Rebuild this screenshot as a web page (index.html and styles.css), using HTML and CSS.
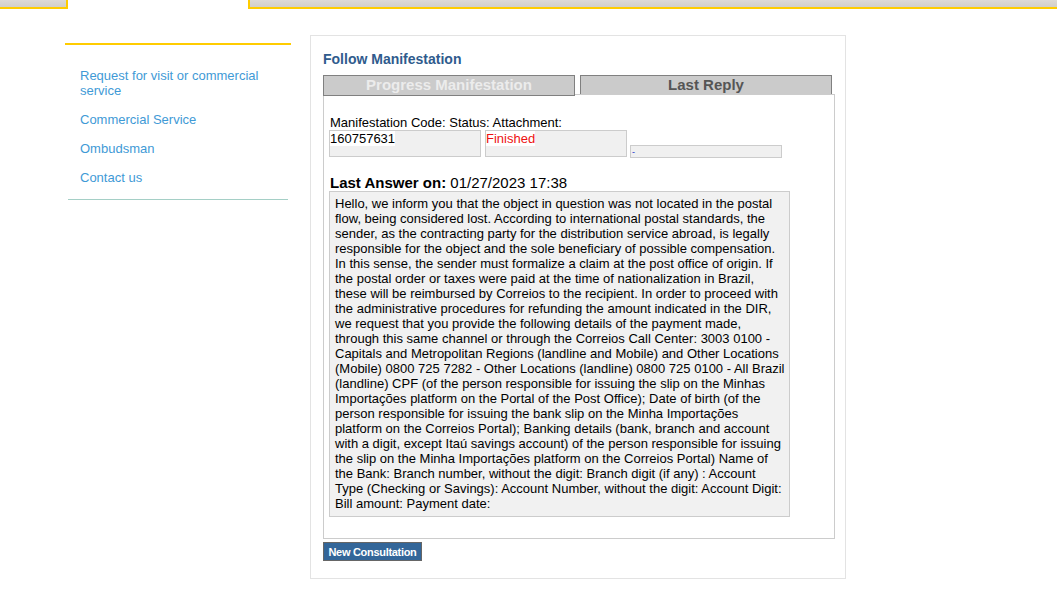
FILE: index.html
```html
<!DOCTYPE html>
<html>
<head>
<meta charset="utf-8">
<link rel="stylesheet" href="styles.css">
</head>
<body>
<div class="topbar">
  <div class="tab-left"></div>
  <div class="tab-gap"></div>
  <div class="tab-right"></div>
</div>
<div class="page">
  <aside class="sidebar">
    <div class="side-line"></div>
    <ul class="side-links">
      <li><a href="#">Request for visit or commercial service</a></li>
      <li><a href="#">Commercial Service</a></li>
      <li><a href="#">Ombudsman</a></li>
      <li><a href="#">Contact us</a></li>
    </ul>
    <div class="side-bottom"></div>
  </aside>
  <main class="panel">
    <h2 class="title">Follow Manifestation</h2>
    <div class="tabs">
      <div class="tab tab-progress">Progress Manifestation</div>
      <div class="tab tab-reply">Last Reply</div>
    </div>
    <div class="content">
      <div class="labels">Manifestation Code: Status: Attachment:</div>
      <div class="fields">
        <div class="field f-code"><span>160757631</span></div>
        <div class="field f-status"><span>Finished</span></div>
        <div class="field f-attach"><span>-</span></div>
      </div>
      <div class="answer-head"><b>Last Answer on:</b> 01/27/2023 17:38</div>
      <div class="answer">Hello, we inform you that the object in question was not located in the postal<br>flow, being considered lost. According to international postal standards, the<br>sender, as the contracting party for the distribution service abroad, is legally<br>responsible for the object and the sole beneficiary of possible compensation.<br>In this sense, the sender must formalize a claim at the post office of origin. If<br>the postal order or taxes were paid at the time of nationalization in Brazil,<br>these will be reimbursed by Correios to the recipient. In order to proceed with<br>the administrative procedures for refunding the amount indicated in the DIR,<br>we request that you provide the following details of the payment made,<br>through this same channel or through the Correios Call Center: 3003 0100 -<br>Capitals and Metropolitan Regions (landline and Mobile) and Other Locations<br>(Mobile) 0800 725 7282 - Other Locations (landline) 0800 725 0100 - All Brazil<br>(landline) CPF (of the person responsible for issuing the slip on the Minhas<br>Importações platform on the Portal of the Post Office); Date of birth (of the<br>person responsible for issuing the bank slip on the Minha Importações<br>platform on the Correios Portal); Banking details (bank, branch and account<br>with a digit, except Itaú savings account) of the person responsible for issuing<br>the slip on the Minha Importações platform on the Correios Portal) Name of<br>the Bank: Branch number, without the digit: Branch digit (if any) : Account<br>Type (Checking or Savings): Account Number, without the digit: Account Digit:<br>Bill amount: Payment date:</div>
    </div>
    <button class="btn">New Consultation</button>
  </main>
</div>
</body>
</html>
```
FILE: styles.css
```css
* { box-sizing: border-box; }
body {
  margin: 0;
  font-family: "Liberation Sans", Arial, sans-serif;
  background: #fff;
  color: #000;
}
.topbar {
  display: flex;
  height: 9px;
}
.tab-left {
  width: 68px;
  background: linear-gradient(#dedad6, #d2cec9);
  border-right: 2px solid #ffcc00;
  border-bottom: 2px solid #ffcc00;
}
.tab-gap { width: 180px; }
.tab-right {
  flex: 1;
  background: linear-gradient(#dedad6, #d2cec9);
  border-left: 2px solid #ffcc00;
  border-bottom: 2px solid #ffcc00;
}
.page {
  display: flex;
  align-items: flex-start;
  padding-left: 65px;
}
.sidebar {
  width: 226px;
  margin-top: 34px;
}
.side-line {
  height: 2px;
  background: #ffcc00;
}
.side-links {
  list-style: none;
  margin: 0;
  padding: 23px 0 0 15px;
}
.side-links li {
  font-size: 13px;
  line-height: 15px;
  margin-bottom: 14px;
}
.side-links a {
  color: #3f9ad6;
  text-decoration: none;
}
.side-bottom {
  height: 1px;
  background: #a5cfc6;
  margin: 0 3px;
}
.panel {
  width: 536px;
  margin-left: 19px;
  margin-top: 26px;
  height: 544px;
  border: 1px solid #e3e3e3;
  padding: 15px 12px 0 12px;
}
.title {
  margin: 0;
  font-size: 14px;
  font-weight: bold;
  color: #2f5b8d;
  line-height: 17px;
}
.tabs {
  display: flex;
  margin-top: 7px;
  height: 21px;
  align-items: flex-start;
  position: relative;
  z-index: 1;
}
.tab {
  height: 21px;
  background: #cbcbcb;
  border: 1px solid #808080;
  font-size: 15px;
  font-weight: bold;
  text-align: center;
  line-height: 18px;
}
.tab-progress {
  width: 252px;
  color: #ececec;
}
.tab-reply {
  width: 252px;
  margin-left: 5px;
  height: 19px;
  border-bottom: none;
  color: #555;
}
.content {
  width: 512px;
  height: 445px;
  margin-top: -2px;
  border: 1px solid #cccccc;
  padding: 20px 0 0 5px;
}
.labels {
  font-size: 13px;
  line-height: 15px;
  padding-left: 1px;
}
.fields {
  display: flex;
  align-items: flex-end;
}
.field {
  background: #f0f0f0;
  border: 1px solid #cccccc;
  font-size: 13px;
  line-height: 15px;
}
.field span { background: #fff; }
.f-code { width: 152px; height: 27px; }
.f-status { width: 142px; height: 27px; margin-left: 4px; color: #ee1111; }
.f-attach {
  width: 152px; height: 13px; margin-left: 3px; margin-bottom: -1px;
  font-size: 9px; line-height: 12px; color: #2233cc;
}
.f-attach span { background: transparent; padding-left: 1px; }
.answer-head {
  margin-top: 17px;
  font-size: 15px;
  line-height: 17px;
  padding-left: 1px;
}
.answer {
  width: 461px;
  height: 326px;
  background: #f1f1f1;
  border: 1px solid #cccccc;
  padding: 4px 4px 5px 5px;
  font-size: 13px;
  line-height: 15px;
  white-space: nowrap;
  overflow: hidden;
}
.btn {
  display: block;
  margin-top: 3px;
  width: 99px;
  height: 19px;
  padding: 0;
  background: #336699;
  border: 1px solid #666;
  color: #fff;
  font-family: "Liberation Sans", Arial, sans-serif;
  font-size: 11px;
  font-weight: bold;
  letter-spacing: -0.3px;
}
```
